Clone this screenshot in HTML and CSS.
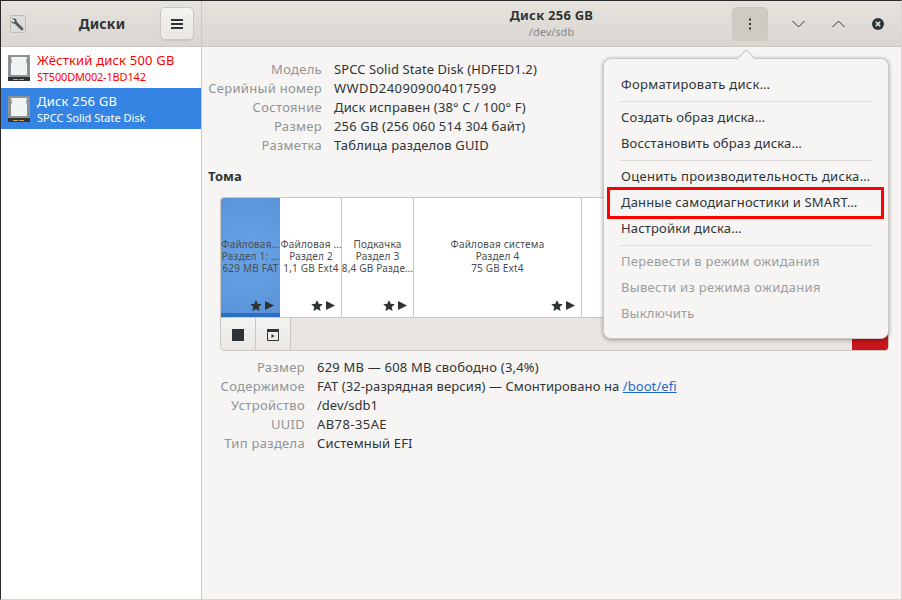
FILE: index.html
```html
<!DOCTYPE html>
<html lang="ru">
<head>
<meta charset="utf-8">
<title>Диски</title>
<link rel="stylesheet" href="styles.css">
</head>
<body>
<div class="window">
  <aside class="side">
    <header class="side-head">
      <svg class="app-icon" width="16" height="18" viewBox="0 0 16 18"><rect x="0.5" y="0.5" width="15" height="17" rx="1.5" fill="#dcdcda" stroke="#bdbdba"/><path d="M2 3l4 1 1 3 5 5c1 1 2 2 1 3s-2 0-3-1L5 9 2 8l-0.500-2 2 1.500 1.500-1.500L3 4z" fill="#55585a"/></svg>
      <h1 class="side-title">Диски</h1>
      <button class="btn menu-btn"><svg width="12" height="10" viewBox="0 0 12 10"><path d="M0 1h12M0 5h12M0 9h12" stroke="#2e3436" stroke-width="2"/></svg></button>
    </header>
    <ul class="disks">
      <li class="disk warn">
        <svg class="disk-icon" width="22" height="26" viewBox="0 0 22 26"><rect width="22" height="26" fill="#8e9294"/><path d="M3 3q0-1 1-1h14q1 0 1 1l-1 3 1 3v10q0 1-1 1H4q-1 0-1-1V9l1-3z" fill="#f0f3f3"/><rect y="22" width="22" height="4" fill="#2e3436"/><path d="M5 24.500h5M11 24.500h5" stroke="#e8a33a" stroke-width="1"/></svg>
        <div><div class="disk-name">Жёсткий диск 500 GB</div><div class="disk-sub">ST500DM002-1BD142</div></div>
      </li>
      <li class="disk sel">
        <svg class="disk-icon" width="22" height="26" viewBox="0 0 22 26"><rect width="22" height="26" fill="#8e9294"/><path d="M3 3q0-1 1-1h14q1 0 1 1l-1 3 1 3v10q0 1-1 1H4q-1 0-1-1V9l1-3z" fill="#f0f3f3"/><rect y="22" width="22" height="4" fill="#2e3436"/><path d="M5 24.500h5M11 24.500h5" stroke="#e8a33a" stroke-width="1"/></svg>
        <div><div class="disk-name">Диск 256 GB</div><div class="disk-sub">SPCC Solid State Disk</div></div>
      </li>
    </ul>
  </aside>
  <main class="main">
    <header class="main-head">
      <div class="head-title"><div class="title">Диск 256 GB</div><div class="subtitle">/dev/sdb</div></div>
      <div class="head-actions">
        <button class="btn dots-btn"><svg width="4" height="12" viewBox="0 0 4 12"><path d="M2 0.500v2M2 5v2M2 9.500v2" stroke="#2e3436" stroke-width="2"/></svg></button>
        <button class="wc"><svg width="13" height="8" viewBox="0 0 13 8"><path d="M.5 1l6 6 6-6" fill="none" stroke="#2e3436"/></svg></button>
        <button class="wc"><svg width="13" height="8" viewBox="0 0 13 8"><path d="M.5 7l6-6 6 6" fill="none" stroke="#2e3436"/></svg></button>
        <button class="wc"><svg width="12" height="12" viewBox="0 0 12 12"><circle cx="6" cy="6" r="6" fill="#2e3436"/><path d="M3.800 3.800l4.400 4.400M8.200 3.800l-4.400 4.400" stroke="#eee" stroke-width="1.500"/></svg></button>
      </div>
    </header>
    <div class="content">
      <dl class="props props-top">
        <dt>Модель</dt><dd class="tight">SPCC Solid State Disk (HDFED1.2)</dd>
        <dt>Серийный номер</dt><dd class="wide">WWDD240909004017599</dd>
        <dt>Состояние</dt><dd>Диск исправен (38° C / 100° F)</dd>
        <dt>Размер</dt><dd>256 GB (256 060 514 304 байт)</dd>
        <dt>Разметка</dt><dd>Таблица разделов GUID</dd>
      </dl>
      <h2 class="section">Тома</h2>
      <section class="volumes">
        <div class="parts">
          <div class="part active w59"><div class="part-text"><span>Файловая…</span><span>Раздел 1: …</span><span>629 MB FAT</span></div><div class="marks"><svg class="star" width="12" height="11" viewBox="0 0 12 11"><path d="M6 0l1.700 3.800 4.100.4-3.100 2.700.9 4.100L6 8.900 2.400 11l.9-4.100L.2 4.200l4.100-.4z"/></svg><svg width="9" height="9" viewBox="0 0 9 9"><path d="M0 0l9 4.500L0 9z"/></svg></div></div>
          <div class="part w61"><div class="part-text"><span>Файловая …</span><span>Раздел 2</span><span>1,1 GB Ext4</span></div><div class="marks"><svg class="star" width="12" height="11" viewBox="0 0 12 11"><path d="M6 0l1.700 3.800 4.100.4-3.100 2.700.9 4.100L6 8.900 2.400 11l.9-4.100L.2 4.200l4.100-.4z"/></svg><svg width="9" height="9" viewBox="0 0 9 9"><path d="M0 0l9 4.500L0 9z"/></svg></div></div>
          <div class="part w72"><div class="part-text"><span>Подкачка</span><span>Раздел 3</span><span>8,4 GB Разде…</span></div><div class="marks"><svg class="star" width="12" height="11" viewBox="0 0 12 11"><path d="M6 0l1.700 3.800 4.100.4-3.100 2.700.9 4.100L6 8.900 2.400 11l.9-4.100L.2 4.200l4.100-.4z"/></svg><svg width="9" height="9" viewBox="0 0 9 9"><path d="M0 0l9 4.500L0 9z"/></svg></div></div>
          <div class="part w168"><div class="part-text"><span>Файловая система</span><span>Раздел 4</span><span>75 GB Ext4</span></div><div class="marks"><svg class="star" width="12" height="11" viewBox="0 0 12 11"><path d="M6 0l1.700 3.800 4.100.4-3.100 2.700.9 4.100L6 8.900 2.400 11l.9-4.100L.2 4.200l4.100-.4z"/></svg><svg width="9" height="9" viewBox="0 0 9 9"><path d="M0 0l9 4.500L0 9z"/></svg></div></div>
          <div class="part rest"></div>
        </div>
        <div class="vol-bar">
          <button class="tool tool-first"><svg width="12" height="12" viewBox="0 0 12 12"><rect width="12" height="12" fill="#2e3436"/></svg></button>
          <button class="tool"><svg width="12" height="12" viewBox="0 0 12 12"><path d="M.5 2.500h11v9H.5z" fill="none" stroke="#2e3436"/><rect width="12" height="2.500" fill="#2e3436"/><path d="M4.500 5l3 2-3 2z" fill="#2e3436"/></svg></button>
          <div class="bar-fill"></div>
          <button class="tool-danger"></button>
        </div>
      </section>
      <dl class="props props-low">
        <dt>Размер</dt><dd class="mid">629 MB — 608 MB свободно (3,4%)</dd>
        <dt>Содержимое</dt><dd class="tight">FAT (32-разрядная версия) — Смонтировано на <a href="#">/boot/efi</a></dd>
        <dt>Устройство</dt><dd class="none">/dev/sdb1</dd>
        <dt>UUID</dt><dd class="wide">AB78-35AE</dd>
        <dt>Тип раздела</dt><dd>Системный EFI</dd>
      </dl>
    </div>
  </main>
  <div class="popover">
    <span class="arrow"></span>
    <div class="item wide-item">Форматировать диск…</div>
    <hr>
    <div class="item">Создать образ диска…</div>
    <div class="item">Восстановить образ диска…</div>
    <hr>
    <div class="item wide-item">Оценить производительность диска…</div>
    <div class="item outlined">Данные самодиагностики и SMART…</div>
    <div class="item">Настройки диска…</div>
    <hr>
    <div class="item off wide-item">Перевести в режим ожидания</div>
    <div class="item off wide-item">Вывести из режима ожидания</div>
    <div class="item off">Выключить</div>
  </div>
</div>
</body>
</html>
```
FILE: styles.css
```css
* { box-sizing: border-box; }
html, body { margin: 0; height: 100%; }
body { font-family: "Noto Sans", sans-serif; font-size: 13px; color: #2e3436; overflow: hidden; background: #f6f5f4; }
button { padding: 0; margin: 0; font: inherit; border: 0; background: none; display: flex; align-items: center; justify-content: center; }
.window { position: relative; display: flex; width: 902px; height: 600px; border: 1px solid #2a2a2a; border-color: #2a2a2a #d8d4d0 #d8d4d0 #2a2a2a; }
.side { width: 201px; flex: none; background: #fff; border-right: 1px solid #cdc7c2; }
.side-head { height: 46px; display: flex; align-items: center; padding: 0 7px 0 9px; background: linear-gradient(#e6e3df, #d9d5d0); border-bottom: 1px solid #cdc7c2; }
.app-icon { flex: none; }
.side-title { flex: 1; margin: 0; padding-left: 18px; font-size: 14px; font-weight: 700; text-align: center; letter-spacing: .15px; color: #2e3436; }
.btn { width: 34px; height: 33px; flex: none; border: 1px solid #cdc7c2; border-radius: 5px; background: linear-gradient(#f4f3f1, #e9e6e3); box-shadow: 0 1px 1px rgba(0,0,0,.08); }
.disks { list-style: none; margin: 0; padding: 0; }
.disk { height: 41px; display: flex; align-items: center; gap: 7px; padding-left: 7px; line-height: 18px; }
.disk-name { font-size: 13px; letter-spacing: .2px; }
.disk-sub { font-size: 11px; line-height: 15px; letter-spacing: 0; }
.warn { color: #ff0000; }
.warn .disk-sub { letter-spacing: -.18px; }
.sel { background: #3584e4; color: #fff; }
.main { flex: 1; display: flex; flex-direction: column; min-width: 0; }
.main-head { height: 46px; flex: none; position: relative; display: flex; align-items: center; justify-content: flex-end; padding-right: 3px; background: linear-gradient(#e6e3df, #d9d5d0); border-bottom: 1px solid #cdc7c2; }
.head-title { position: absolute; left: 286px; top: 6px; width: 127px; text-align: center; }
.title { font-size: 13px; font-weight: 700; line-height: 17px; letter-spacing: .25px; }
.subtitle { font-size: 11px; line-height: 15px; color: #83878a; }
.head-actions { display: flex; align-items: center; }
.dots-btn { width: 36px; height: 34px; margin-right: 10px; background: #cfcac4; box-shadow: none; }
.wc { width: 40px; height: 34px; }
.content { flex: 1; padding: 13px 12px 0 6px; }
.props { display: grid; margin: 0; column-gap: 12px; line-height: 19px; }
.props-top { grid-template-columns: 114px 1fr; }
.props-low { grid-template-columns: 97px 1fr; margin-top: 7px; }
dt { text-align: right; color: #919395; letter-spacing: .3px; }
dd { margin: 0; letter-spacing: .16px; }
dd.tight { letter-spacing: .08px; }
dd.mid { letter-spacing: .2px; }
dd.none { letter-spacing: 0; }
dd.wide { letter-spacing: .42px; }
a { color: #1b6acb; }
.section { margin: 12px 0 12px; font-size: 13px; font-weight: 700; line-height: 18px; }
.volumes { margin-left: 12px; width: 669px; height: 154px; border: 1px solid #cdc7c2; border-radius: 4px; background: #e8e5e2; overflow: hidden; }
.parts { display: flex; height: 120px; background: #fff; border-bottom: 1px solid #cdc7c2; }
.part { position: relative; flex: none; display: flex; border-right: 1px solid #cdc7c2; background: #fff; font-size: 10px; letter-spacing: .2px; color: #4a4e50; }
.w59 { width: 59px; } .w61 { width: 61px; } .w72 { width: 72px; } .w168 { width: 168px; }
.rest { flex: 1; border-right: 0; }
.part.active { background: radial-gradient(circle, #68a3e8, #5a93d8); border-bottom: 4px solid #2a6fc4; border-right: 0; margin-right: 1px; }
.part-text { width: 100%; height: 100%; display: flex; flex-direction: column; align-items: center; justify-content: center; line-height: 12px; white-space: nowrap; padding-bottom: 4px; }
.active .part-text { padding-bottom: 0; }
.marks { position: absolute; right: 6px; bottom: 6px; display: flex; align-items: center; gap: 3px; }
.active .marks { bottom: 2px; }
.marks svg { fill: #2e3436; }
.vol-bar { display: flex; height: 33px; }
.tool { width: 35px; height: 33px; border-right: 1px solid #cdc7c2; background: linear-gradient(#f4f3f1, #e9e6e3); }
.bar-fill { flex: 1; }
.tool-danger { width: 36px; background: #c7161d; }
.popover { position: absolute; left: 602px; top: 57px; width: 286px; height: 281px; padding: 13px 17px 0; background: #f6f5f4; border: 1px solid #cdc7c2; border-radius: 8px; box-shadow: 0 1px 4px rgba(0,0,0,.35); }
.arrow { position: absolute; left: 135px; top: -7px; width: 14px; height: 14px; background: #f6f5f4; border: 1px solid #cdc7c2; border-width: 1px 0 0 1px; transform: rotate(45deg); }
.item { height: 26px; line-height: 24px; white-space: nowrap; letter-spacing: .17px; }
.wide-item { letter-spacing: .3px; }
.popover hr { margin: 3px -1px; height: 1px; border: 0; background: #dedbd8; }
.off { color: #9b9d9e; }
.outlined { position: relative; }
.outlined::after { content: ""; position: absolute; left: -14px; right: -13px; top: -3px; bottom: -3px; border: 3px solid #ff0000; }
```
